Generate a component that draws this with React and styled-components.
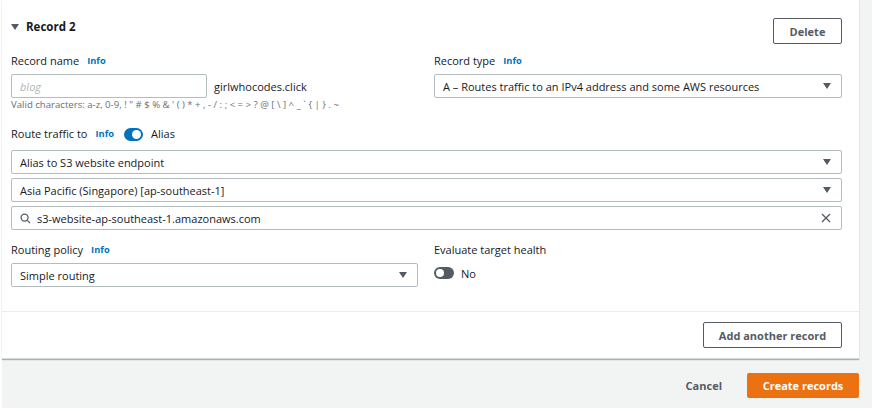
import React from "react";
import styled, { createGlobalStyle } from "styled-components";

const Global = createGlobalStyle`
  html, body { margin: 0; padding: 0; background: #ffffff; }
  body { font-family: "Open Sans", "Liberation Sans", Arial, sans-serif; color: #16191f; }
  * { box-sizing: border-box; }
`;

const Shell = styled.div`
  margin-left: 2px;
  width: 870px;
  height: 408px;
  background: #f2f3f3;
  display: flex;
  flex-direction: column;
`;

const Card = styled.div`
  width: 857px;
  background: #ffffff;
  box-shadow: 0 1px 1px 0 rgba(0, 28, 36, 0.3);
  border-bottom: 1px solid #d5dbdb;
`;

const Section = styled.div`
  padding: ${(p) => p.$pad};
  border-top: ${(p) => (p.$divider ? "1px solid #eaeded" : "none")};
  display: flex;
  flex-direction: column;
`;

const HeaderRow = styled.div`
  display: flex;
  justify-content: ${(p) => (p.$end ? "flex-end" : "space-between")};
  align-items: flex-start;
  margin-right: ${(p) => (p.$end ? 0 : 17)}px;
`;

const Title = styled.div`
  display: flex;
  align-items: center;
  gap: 7px;
  font-weight: 700;
  font-size: 11.5px;
  line-height: 16px;
  color: #16191f;
  margin-top: 1px;
`;

const Caret = styled.span`
  width: 0;
  height: 0;
  border-left: 4px solid transparent;
  border-right: 4px solid transparent;
  border-top: 6px solid #545b64;
`;

const OutlineButton = styled.button`
  height: 26px;
  width: ${(p) => p.$w}px;
  border: 1px solid #545b64;
  border-radius: 2px;
  background: #ffffff;
  color: #545b64;
  font-family: inherit;
  font-weight: 700;
  font-size: 11px;
  padding: 0;
`;

const Grid = styled.div`
  display: grid;
  grid-template-columns: 407px 408px;
  column-gap: 16px;
  margin-top: ${(p) => p.$mt || 0}px;
`;

const Field = styled.div`
  display: flex;
  flex-direction: column;
`;

const Label = styled.div`
  display: flex;
  align-items: center;
  gap: 8px;
  font-size: 11px;
  line-height: 14px;
  color: #16191f;
  margin-bottom: ${(p) => (p.$mb != null ? p.$mb : 6)}px;
`;

const Info = styled.span`
  color: #0073bb;
  font-weight: 700;
  font-size: 9.3px;
`;

const InputRow = styled.div`
  display: flex;
  align-items: center;
  gap: 7px;
`;

const TextInput = styled.div`
  width: ${(p) => p.$w || "100%"};
  height: 24px;
  border: 1px solid #b4bdbe;
  border-radius: 2px;
  display: flex;
  align-items: center;
  padding: 0 8px;
  font-size: 11px;
  color: ${(p) => (p.$placeholder ? "#aab7b8" : "#16191f")};
  font-style: ${(p) => (p.$placeholder ? "italic" : "normal")};
`;

const Suffix = styled.span`
  font-size: 11px;
  color: #16191f;
`;

const Hint = styled.div`
  font-size: 9.6px;
  line-height: 12px;
  color: #687078;
  margin-top: 1px;
`;

const Select = styled.div`
  height: 24px;
  border: 1px solid #b4bdbe;
  border-radius: 2px;
  display: flex;
  align-items: center;
  justify-content: space-between;
  padding: 0 10px 0 8px;
  font-size: 11px;
  color: #16191f;
  gap: 6px;
`;

const Value = styled.span`
  flex: 1;
  white-space: nowrap;
`;

const Arrow = styled.span`
  width: 0;
  height: 0;
  border-left: 4px solid transparent;
  border-right: 4px solid transparent;
  border-top: 6px solid #545b64;
`;

const Stack = styled.div`
  display: flex;
  flex-direction: column;
  gap: 4px;
  margin-right: 17px;
  margin-top: 9px;
`;

const RouteRow = styled.div`
  display: flex;
  align-items: center;
  margin-top: 16px;
  font-size: 11px;
  line-height: 14px;
  gap: 8px;
`;

const Toggle = styled.span`
  position: relative;
  display: inline-block;
  width: ${(p) => p.$w}px;
  height: ${(p) => p.$h}px;
  border-radius: 8px;
  background: ${(p) => (p.$on ? "#0073bb" : "#545b64")};
  margin-left: ${(p) => p.$ml || 0}px;
  &::after {
    content: "";
    position: absolute;
    top: 2px;
    ${(p) => (p.$on ? "right: 2px;" : "left: 2px;")}
    width: ${(p) => p.$h - 4}px;
    height: ${(p) => p.$h - 4}px;
    border-radius: 50%;
    background: #ffffff;
  }
`;

const ToggleText = styled.span`
  font-size: 11px;
  color: #16191f;
`;

const ToggleRow = styled.div`
  display: flex;
  align-items: center;
  gap: 7px;
  height: 24px;
`;

const Spacer = styled.div`
  height: ${(p) => p.$h}px;
`;

const Footer = styled.div`
  display: flex;
  justify-content: flex-end;
  align-items: center;
  gap: 25px;
  width: 857px;
  margin-top: 14px;
`;

const LinkButton = styled.button`
  background: none;
  border: none;
  font-family: inherit;
  font-weight: 700;
  font-size: 11px;
  color: #545b64;
  padding: 0;
`;

const PrimaryButton = styled.button`
  width: 112px;
  height: 25px;
  border: none;
  border-radius: 2px;
  background: #ec7211;
  color: #ffffff;
  font-family: inherit;
  font-weight: 700;
  font-size: 11px;
  padding: 0;
`;

const SearchIcon = () => (
  <svg width="11" height="11" viewBox="0 0 12 12" fill="none" stroke="#545b64" strokeWidth="1.4">
    <circle cx="5" cy="5" r="3.8" />
    <line x1="7.8" y1="7.8" x2="11" y2="11" />
  </svg>
);

const ClearIcon = () => (
  <svg width="10" height="10" viewBox="0 0 10 10" stroke="#545b64" strokeWidth="1.3">
    <line x1="1" y1="1" x2="9" y2="9" />
    <line x1="9" y1="1" x2="1" y2="9" />
  </svg>
);

export default function App() {
  return (
    <>
      <Global />
      <Shell>
        <Card>
          <Section $pad="18px 0 12px 9px">
            <HeaderRow>
              <Title>
                <Caret />
                Record 2
              </Title>
              <OutlineButton $w={69}>Delete</OutlineButton>
            </HeaderRow>
            <Grid $mt={10}>
              <Field>
                <Label>
                  Record name <Info>Info</Info>
                </Label>
                <InputRow>
                  <TextInput $w="196px" $placeholder>
                    blog
                  </TextInput>
                  <Suffix>girlwhocodes.click</Suffix>
                </InputRow>
                <Hint>
                  Valid characters: a-z, 0-9, ! " # $ % &amp; ' ( ) * + , - / : ; &lt; = &gt; ? @ [ \ ] ^ _ ` {"{"} | {"}"} . ~
                </Hint>
              </Field>
              <Field>
                <Label>
                  Record type <Info>Info</Info>
                </Label>
                <Select>
                  <Value>A – Routes traffic to an IPv4 address and some AWS resources</Value>
                  <Arrow />
                </Select>
              </Field>
            </Grid>
            <RouteRow>
              Route traffic to <Info>Info</Info>
              <Toggle $on $w={19} $h={13} $ml={2} />
              <ToggleText>Alias</ToggleText>
            </RouteRow>
            <Stack>
              <Select>
                <Value>Alias to S3 website endpoint</Value>
                <Arrow />
              </Select>
              <Select>
                <Value>Asia Pacific (Singapore) [ap-southeast-1]</Value>
                <Arrow />
              </Select>
              <Select>
                <SearchIcon />
                <Value>s3-website-ap-southeast-1.amazonaws.com</Value>
                <ClearIcon />
              </Select>
            </Stack>
            <Grid $mt={13}>
              <Field>
                <Label>
                  Routing policy <Info>Info</Info>
                </Label>
                <Select>
                  <Value>Simple routing</Value>
                  <Arrow />
                </Select>
              </Field>
              <Field>
                <Label $mb={4}>Evaluate target health</Label>
                <ToggleRow>
                  <Toggle $w={20} $h={12} />
                  <ToggleText>No</ToggleText>
                </ToggleRow>
              </Field>
            </Grid>
            <Spacer $h={12} />
          </Section>
          <Section $pad="10px 17px 10px 0" $divider>
            <HeaderRow $end>
              <OutlineButton $w={139}>Add another record</OutlineButton>
            </HeaderRow>
          </Section>
        </Card>
        <Footer>
          <LinkButton>Cancel</LinkButton>
          <PrimaryButton>Create records</PrimaryButton>
        </Footer>
      </Shell>
    </>
  );
}
